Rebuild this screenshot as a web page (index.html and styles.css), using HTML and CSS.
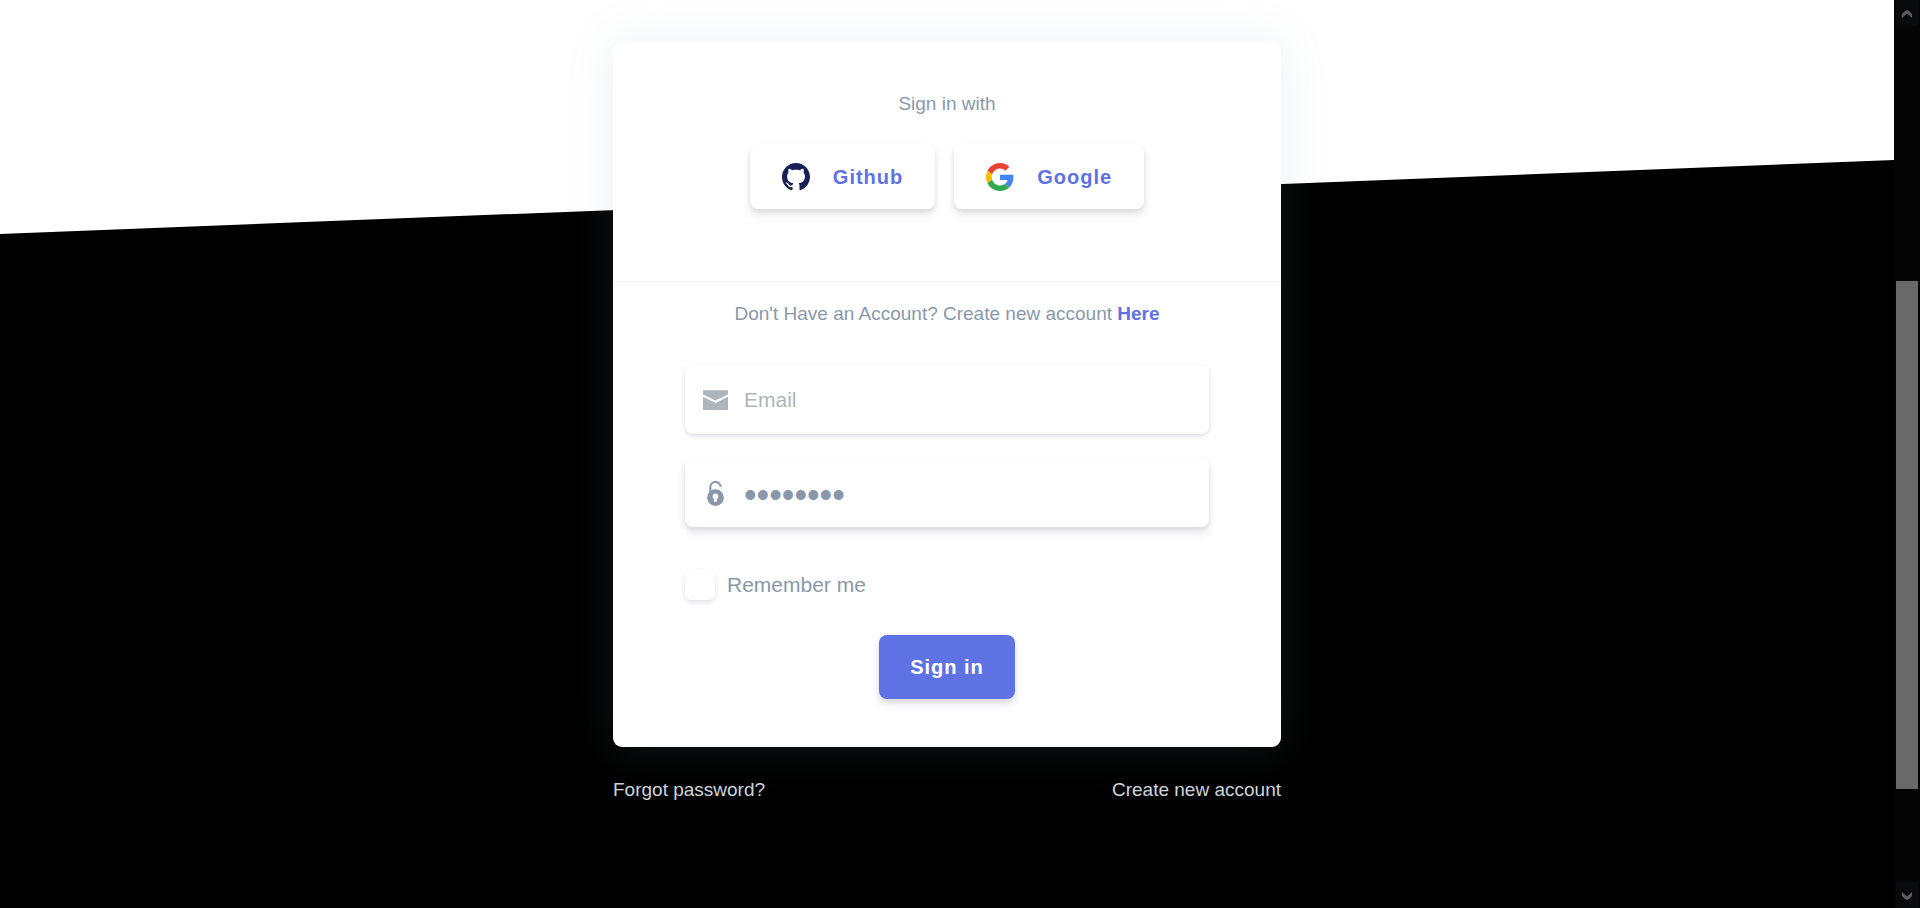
FILE: index.html
```html
<!DOCTYPE html>
<html lang="en">
<head>
<meta charset="utf-8">
<title>Sign in</title>
<meta name="viewport" content="width=device-width, initial-scale=1">
<link rel="stylesheet" href="styles.css">
</head>
<body>
<main class="page">
  <div class="column">
    <section class="card">
      <div class="card-header">
        <p class="note">Sign in with</p>
        <div class="providers">
          <button type="button" class="btn btn-neutral">
            <svg class="btn-icon" viewBox="0 0 16 16" aria-hidden="true"><path fill="#161f56" d="M8 0C3.58 0 0 3.58 0 8c0 3.54 2.29 6.53 5.47 7.59.4.07.55-.17.55-.38 0-.19-.01-.82-.01-1.49-2.01.37-2.53-.49-2.69-.94-.09-.23-.48-.94-.82-1.13-.28-.15-.68-.52-.01-.53.63-.01 1.08.58 1.23.82.72 1.21 1.87.87 2.33.66.07-.52.28-.87.51-1.07-1.78-.2-3.64-.89-3.64-3.95 0-.87.31-1.59.82-2.15-.08-.2-.36-1.02.08-2.12 0 0 .67-.21 2.2.82.64-.18 1.32-.27 2-.27s1.36.09 2 .27c1.53-1.04 2.2-.82 2.2-.82.44 1.1.16 1.92.08 2.12.51.56.82 1.27.82 2.15 0 3.07-1.87 3.75-3.65 3.95.29.25.54.73.54 1.48 0 1.07-.01 1.93-.01 2.2 0 .21.15.46.55.38A8.01 8.01 0 0 0 16 8c0-4.42-3.58-8-8-8z"/></svg>
            <span>Github</span>
          </button>
          <button type="button" class="btn btn-neutral">
            <svg class="btn-icon" viewBox="0 0 48 48" aria-hidden="true"><path fill="#ea4335" d="M24 9.5c3.54 0 6.71 1.22 9.21 3.6l6.85-6.85C35.9 2.38 30.47 0 24 0 14.62 0 6.51 5.38 2.56 13.22l7.98 6.19C12.43 13.72 17.74 9.5 24 9.5z"/><path fill="#4285f4" d="M46.98 24.55c0-1.57-.15-3.09-.38-4.55H24v9.02h12.94c-.58 2.96-2.26 5.48-4.78 7.18l7.73 6c4.51-4.18 7.09-10.36 7.09-17.65z"/><path fill="#fbbc05" d="M10.53 28.59A14.5 14.5 0 0 1 9.77 24c0-1.6.27-3.14.76-4.59l-7.98-6.19A23.9 23.9 0 0 0 0 24c0 3.88.92 7.54 2.56 10.78l7.97-6.19z"/><path fill="#34a853" d="M24 48c6.48 0 11.93-2.13 15.89-5.81l-7.73-6c-2.15 1.45-4.92 2.3-8.16 2.3-6.26 0-11.57-4.22-13.47-9.91l-7.98 6.19C6.51 42.62 14.62 48 24 48z"/></svg>
            <span>Google</span>
          </button>
        </div>
      </div>
      <div class="card-body">
        <p class="note">Don't Have an Account? Create new account <a href="#register">Here</a></p>
        <form class="form">
          <div class="field field-email">
            <label class="field-icon" for="email" aria-label="Email">
              <svg viewBox="0 0 24 24" aria-hidden="true"><path fill="currentColor" d="M0 3h24v4.200L12 13 0 7.200zM0 9.400l12 6L24 9.400V22H0z"/></svg>
            </label>
            <input id="email" type="email" placeholder="Email">
          </div>
          <div class="field field-password">
            <label class="field-icon" for="password" aria-label="Password">
              <svg viewBox="0 0 24 24" aria-hidden="true"><path fill="none" stroke="currentColor" stroke-width="2" d="M7 12V6a5 5 0 0 1 10-.2"/><path fill="currentColor" fill-rule="evenodd" d="M12 8a8 8 0 1 0 0 16 8 8 0 0 0 0-16zm0 4a2.800 2.800 0 0 1 1.500 5.200V20h-3v-2.800A2.800 2.800 0 0 1 12 12z"/></svg>
            </label>
            <input id="password" type="password" value="password">
          </div>
          <div class="remember">
            <input id="remember" type="checkbox">
            <label for="remember">Remember me</label>
          </div>
          <button type="button" class="btn btn-primary">Sign in</button>
        </form>
      </div>
    </section>
    <nav class="links">
      <a href="#forgot">Forgot password?</a>
      <a href="#create">Create new account</a>
    </nav>
  </div>
</main>
<div class="scroll" aria-hidden="true">
  <div class="scroll-arrow"><svg viewBox="0 0 10 8"><path fill="#5c5c5c" d="M0 8V4l3-3 2-1 2 1 3 3v4L5 3.500z"/></svg></div>
  <div class="scroll-track"><div class="scroll-thumb"></div></div>
  <div class="scroll-arrow"><svg viewBox="0 0 10 8"><path fill="#5c5c5c" d="M0 0v4l3 3 2 1 2-1 3-3V0L5 4.500z"/></svg></div>
</div>
</body>
</html>
```
FILE: styles.css
```css
* {
  box-sizing: border-box;
}

body {
  margin: 0;
  display: flex;
  min-height: 100vh;
  background: #fff;
  color: #8898aa;
  font-family: "Liberation Sans", Arial, sans-serif;
  font-size: 19px;
  line-height: 28px;
}

p {
  margin: 0;
}

a {
  color: #5e72e4;
  text-decoration: none;
}

.page {
  position: relative;
  z-index: 0;
  flex: 1;
  padding: 42px 24px;
}

/* slanted dark backdrop */
.page::before {
  content: "";
  position: absolute;
  inset: 0;
  z-index: -1;
  background: #000;
  clip-path: polygon(0 234px, 100% 160px, 100% 100%, 0 100%);
}

.column {
  max-width: 668px;
  margin: 0 auto;
}

.card {
  border-radius: 9px;
  background: #fff;
  box-shadow: 0 0 48px rgba(136, 152, 170, 0.15);
}

.card-header {
  padding: 48px 24px 72px;
  border-bottom: 1px solid #f2f2f2;
}

.note {
  text-align: center;
}

.note a {
  font-weight: 700;
}

.providers {
  display: flex;
  justify-content: center;
  gap: 19px;
  margin-top: 26px;
}

.btn {
  display: flex;
  align-items: center;
  justify-content: center;
  gap: 23px;
  padding: 18px 31px;
  border: 0;
  border-radius: 8px;
  font-family: inherit;
  font-size: 20px;
  font-weight: 700;
  line-height: 28px;
  letter-spacing: 1px;
  box-shadow: 0 6px 9px rgba(50, 50, 93, 0.11), 0 2px 5px rgba(0, 0, 0, 0.08);
}

.btn-neutral {
  padding: 18px 32px;
  background: #fff;
  color: #5e72e4;
}

.btn-primary {
  align-self: center;
  background: #5e72e4;
  color: #fff;
}

.btn-icon {
  width: 28px;
  height: 29px;
  padding-top: 1px;
}

.card-body {
  padding: 18px 72px 48px;
}

.form {
  display: flex;
  flex-direction: column;
  margin-top: 37px;
}

.field {
  display: flex;
  align-items: center;
  height: 69px;
  margin-bottom: 24px;
  padding-left: 18px;
  border-radius: 8px;
  background: #fff;
  box-shadow: 0 2px 5px rgba(50, 50, 93, 0.15), 0 1px 0 rgba(0, 0, 0, 0.02);
}

.field-email {
  color: #adb5bd;
}

.field-password {
  padding-top: 2px;
  box-shadow: 0 6px 9px rgba(50, 50, 93, 0.11), 0 2px 5px rgba(0, 0, 0, 0.08);
}

.field-icon {
  display: flex;
}

.field-icon svg {
  width: 25px;
  height: 25px;
}

.field input {
  flex: 1;
  min-width: 0;
  height: 100%;
  padding: 0 16px;
  border: 0;
  outline: 0;
  background: transparent;
  color: #8898aa;
  font-family: inherit;
  font-size: 21px;
}

.field input[type="password"] {
  padding-top: 2px;
  font-size: 36px;
}

.field input::placeholder {
  color: #adb5bd;
  opacity: 1;
}

.remember {
  display: flex;
  align-items: center;
  gap: 12px;
  margin: 19px 0 35px;
  font-size: 21px;
}

.remember input {
  appearance: none;
  width: 30px;
  height: 30px;
  margin: 0;
  border-radius: 6px;
  background: #fff;
  box-shadow: 0 2px 5px rgba(50, 50, 93, 0.15), 0 1px 0 rgba(0, 0, 0, 0.02);
}

.links {
  display: flex;
  justify-content: space-between;
  margin-top: 29px;
}

.links a {
  color: #ced4da;
}

.scroll {
  display: flex;
  flex-direction: column;
  width: 26px;
  height: 100vh;
  padding: 0 2px;
  background: #050505;
}

.scroll-arrow {
  display: flex;
  align-items: center;
  justify-content: center;
  height: 26px;
  padding-top: 2px;
  background: #090a0c;
}

.scroll-arrow svg {
  width: 10px;
  height: 8px;
}

.scroll-track {
  flex: 1;
  display: grid;
  grid-template-rows: 255fr 508fr 93fr;
}

.scroll-thumb {
  grid-row: 2;
  background: #696969;
}
```
